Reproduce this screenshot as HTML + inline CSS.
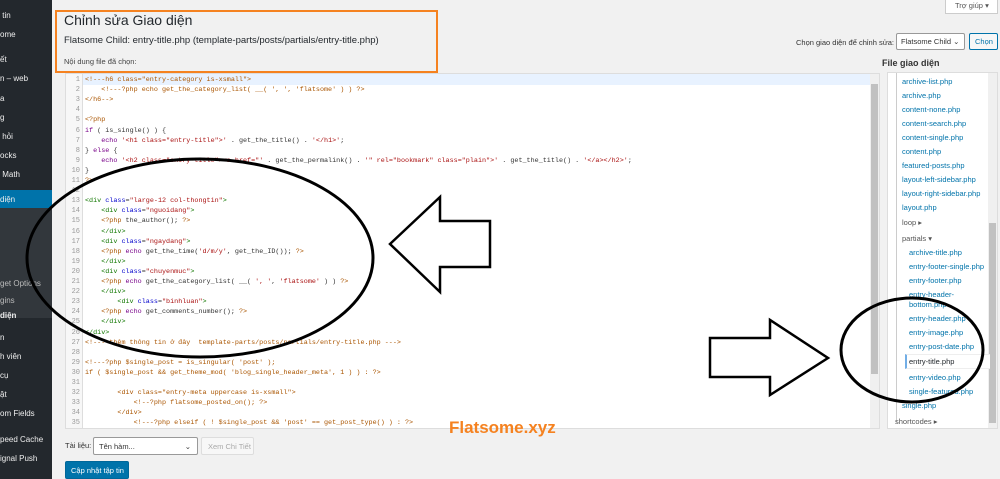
<!DOCTYPE html>
<html><head><meta charset="utf-8"><style>
*{margin:0;padding:0;box-sizing:border-box}
body{width:1000px;height:479px;overflow:hidden;background:#f1f1f1;font-family:"Liberation Sans",sans-serif;position:relative;color:#23282d}
.sb{position:absolute;left:0;top:0;width:52px;height:479px;background:#23282d}
.sb div{position:absolute;left:0;color:#eee;font-size:8px;white-space:nowrap}
.sub{position:absolute;left:0;top:208px;width:52px;height:110px;background:#32373c}
.act{position:absolute;left:0;top:190px;width:52px;height:18px;background:#0073aa}
.abs{position:absolute;white-space:nowrap}
.code{position:absolute;left:65px;top:73px;width:815px;height:356px;background:#fff;border:1px solid #ddd;overflow:hidden}
.gut{position:absolute;left:0;top:0;width:17px;height:100%;background:#f7f7f7;border-right:1px solid #ddd}
.ln{position:absolute;left:0;width:14px;text-align:right;font:7px "Liberation Mono",monospace;color:#999}
.cl{position:absolute;left:19px;font:6.75px "Liberation Mono",monospace;white-space:pre;color:#333}
.t{color:#170}.a{color:#00c}.s{color:#a11}.c{color:#a50}.k{color:#708}
.fl{position:absolute;left:887px;top:72px;width:111px;height:357px;background:#fff;border:1px solid #ddd;overflow:hidden}
.fi{position:absolute;font-size:7.5px;color:#0073aa;white-space:nowrap}
.fd{position:absolute;font-size:7.5px;color:#555;white-space:nowrap}
</style></head><body>
<div class="sb">
<div class="sub"></div><div class="act"></div>
<div style="top:11px">&nbsp;tin</div><div style="top:30px">ome</div><div style="top:55px">ết</div><div style="top:74px">n – web</div><div style="top:94px">a</div><div style="top:113px">g</div><div style="top:132px">&nbsp;hỏi</div><div style="top:151px">ocks</div><div style="top:170px">&nbsp;Math</div>
<div style="top:195px">diện</div>
<div style="top:279px;color:#bbb">get Options</div><div style="top:296px;color:#bbb">gins</div><div style="top:311px;font-weight:bold">diện</div>
<div style="top:333px">n</div><div style="top:352px">h viên</div><div style="top:371px">cụ</div><div style="top:390px">ật</div><div style="top:409px">om Fields</div><div style="top:435px">peed Cache</div><div style="top:454px">ignal Push</div>
</div>
<div class="abs" style="left:55px;top:10px;width:383px;height:63px;border:2px solid #f58220"></div>
<div class="abs" style="left:64px;top:12px;font-size:14px;color:#23282d">Chỉnh sửa Giao diện</div>
<div class="abs" style="left:64px;top:35px;font-size:9.5px;color:#23282d">Flatsome Child: entry-title.php (template-parts/posts/partials/entry-title.php)</div>
<div class="abs" style="left:64px;top:57px;font-size:7.5px;color:#444">Nội dung file đã chọn:</div>
<div class="abs" style="left:945px;top:-2px;width:53px;height:16px;background:#fff;border:1px solid #ccc;border-top:none;font-size:7.5px;color:#555;padding:3px 0 0 9px">Trợ giúp ▾</div>
<div class="abs" style="left:796px;top:38px;font-size:7.5px;color:#333">Chọn giao diện để chỉnh sửa:</div>
<div class="abs" style="left:896px;top:33px;width:69px;height:17px;background:#fff;border:1px solid #999;font-size:7.5px;color:#333;padding:3px 0 0 4px;border-radius:2px">Flatsome Child ⌄</div>
<div class="abs" style="left:969px;top:33px;width:29px;height:17px;background:#f7f7f7;border:1px solid #0073aa;font-size:7.5px;color:#0073aa;padding:3px 0 0 5px;border-radius:2px">Chọn</div>
<div class="abs" style="left:882px;top:58px;font-size:9px;font-weight:bold;color:#333">File giao diện</div>
<div class="code">
<div style="position:absolute;left:17px;top:0;width:790px;height:11px;background:#e8f2ff"></div>
<div class="gut"></div>
<div style="position:absolute;right:0;top:0;width:9px;height:100%;background:#f0f0f0"></div>
<div style="position:absolute;right:1px;top:10px;width:7px;height:290px;background:#c1c1c1"></div>
<div id="lines"></div>
</div>
<div class="fl">
<div style="position:absolute;right:0;top:0;width:9px;height:100%;background:#f0f0f0"></div>
<div style="position:absolute;right:1px;top:150px;width:7px;height:200px;background:#c1c1c1"></div>
<div style="position:absolute;left:8px;top:0;width:1px;height:350px;background:#ccc"></div>
<div class="fi" style="left:14px;top:4px">archive-list.php</div>
<div class="fi" style="left:14px;top:18px">archive.php</div>
<div class="fi" style="left:14px;top:32px">content-none.php</div>
<div class="fi" style="left:14px;top:46px">content-search.php</div>
<div class="fi" style="left:14px;top:60px">content-single.php</div>
<div class="fi" style="left:14px;top:74px">content.php</div>
<div class="fi" style="left:14px;top:88px">featured-posts.php</div>
<div class="fi" style="left:14px;top:102px">layout-left-sidebar.php</div>
<div class="fi" style="left:14px;top:116px">layout-right-sidebar.php</div>
<div class="fi" style="left:14px;top:130px">layout.php</div>
<div class="fd" style="left:14px;top:145px">loop ▸</div>
<div class="fd" style="left:14px;top:161px">partials ▾</div>
<div class="fi" style="left:21px;top:175px">archive-title.php</div>
<div class="fi" style="left:21px;top:189px">entry-footer-single.php</div>
<div class="fi" style="left:21px;top:203px">entry-footer.php</div>
<div class="fi" style="left:21px;top:217px;line-height:10px">entry-header-<br>bottom.php</div>
<div class="fi" style="left:21px;top:241px">entry-header.php</div>
<div class="fi" style="left:21px;top:255px">entry-image.php</div>
<div class="fi" style="left:21px;top:269px">entry-post-date.php</div>
<div style="position:absolute;left:17px;top:281px;width:85px;height:15px;background:#fff;border-left:2px solid #72aee6;border-top:1px solid #eee;border-bottom:1px solid #eee"></div>
<div class="fi" style="left:21px;top:284px;color:#23282d">entry-title.php</div>
<div class="fi" style="left:21px;top:300px">entry-video.php</div>
<div class="fi" style="left:21px;top:314px">single-featured.php</div>
<div class="fi" style="left:14px;top:328px">single.php</div>
<div class="fd" style="left:7px;top:344px">shortcodes ▸</div>
</div>
<div class="abs" style="left:65px;top:441px;font-size:7.5px;color:#333">Tài liệu:</div>
<div class="abs" style="left:93px;top:437px;width:105px;height:18px;background:#fff;border:1px solid #999;font-size:7.5px;color:#333;padding:4px 0 0 5px;border-radius:2px">Tên hàm...<span style="position:absolute;right:6px">⌄</span></div>
<div class="abs" style="left:201px;top:437px;width:53px;height:18px;background:#f7f7f7;border:1px solid #ddd;font-size:7.5px;color:#aaa;padding:4px 0 0 6px;border-radius:2px">Xem Chi Tiết</div>
<div class="abs" style="left:65px;top:461px;width:64px;height:18px;background:#0073aa;border:1px solid #006799;font-size:7.5px;color:#fff;padding:4px 0 0 5px;border-radius:2px">Cập nhật tập tin</div>
<div class="abs" style="left:449px;top:418px;font-size:17px;font-weight:bold;color:#f58220">Flatsome.xyz</div>
<svg class="abs" style="left:0;top:0" width="1000" height="479">
<g fill="none" stroke="#000" stroke-width="3">
<ellipse cx="200" cy="258" rx="173" ry="99"/>
<ellipse cx="912" cy="350" rx="71" ry="52"/>
</g>
<g fill="#fff" stroke="#000" stroke-width="2.5" stroke-linejoin="miter">
<polygon points="390,244 440,197 440,221 490,221 490,267 440,267 440,292"/>
<polygon points="710,338 770,338 770,320 828,358 770,395 770,377 710,377"/>
</g>
</svg>
<script>
var L=[
'<span class="c">&lt;!---h6 class="entry-category is-xsmall"&gt;</span>',
'    <span class="c">&lt;!---?php echo get_the_category_list( __( \', \', \'flatsome\' ) ) ?&gt;</span>',
'<span class="c">&lt;/h6--&gt;</span>','',
'<span class="c">&lt;?php</span>',
'<span class="k">if</span> ( is_single() ) {',
'    <span class="k">echo</span> <span class="s">\'&lt;h1 class="entry-title"&gt;\'</span> . get_the_title() . <span class="s">\'&lt;/h1&gt;\'</span>;',
'} <span class="k">else</span> {',
'    <span class="k">echo</span> <span class="s">\'&lt;h2 class="entry-title"&gt;&lt;a href="\'</span> . get_the_permalink() . <span class="s">\'" rel="bookmark" class="plain"&gt;\'</span> . get_the_title() . <span class="s">\'&lt;/a&gt;&lt;/h2&gt;\'</span>;',
'}','<span class="c">?&gt;</span>','',
'<span class="t">&lt;div</span> <span class="a">class</span>=<span class="s">"large-12 col-thongtin"</span><span class="t">&gt;</span>',
'    <span class="t">&lt;div</span> <span class="a">class</span>=<span class="s">"nguoidang"</span><span class="t">&gt;</span>',
'    <span class="c">&lt;?php</span> the_author(); <span class="c">?&gt;</span>',
'    <span class="t">&lt;/div&gt;</span>',
'    <span class="t">&lt;div</span> <span class="a">class</span>=<span class="s">"ngaydang"</span><span class="t">&gt;</span>',
'    <span class="c">&lt;?php</span> <span class="k">echo</span> get_the_time(<span class="s">\'d/m/y\'</span>, get_the_ID()); <span class="c">?&gt;</span>',
'    <span class="t">&lt;/div&gt;</span>',
'    <span class="t">&lt;div</span> <span class="a">class</span>=<span class="s">"chuyenmuc"</span><span class="t">&gt;</span>',
'    <span class="c">&lt;?php</span> <span class="k">echo</span> get_the_category_list( __( <span class="s">\', \'</span>, <span class="s">\'flatsome\'</span> ) ) <span class="c">?&gt;</span>',
'    <span class="t">&lt;/div&gt;</span>',
'        <span class="t">&lt;div</span> <span class="a">class</span>=<span class="s">"binhluan"</span><span class="t">&gt;</span>',
'    <span class="c">&lt;?php</span> <span class="k">echo</span> get_comments_number(); <span class="c">?&gt;</span>',
'    <span class="t">&lt;/div&gt;</span>',
'<span class="t">&lt;/div&gt;</span>',
'<span class="c">&lt;!--- thêm thông tin ở đây  template-parts/posts/partials/entry-title.php ---&gt;</span>','',
'<span class="c">&lt;!---?php $single_post = is_singular( \'post\' );</span>',
'<span class="c">if ( $single_post &amp;&amp; get_theme_mod( \'blog_single_header_meta\', 1 ) ) : ?&gt;</span>','',
'<span class="c">        &lt;div class="entry-meta uppercase is-xsmall"&gt;</span>',
'<span class="c">            &lt;!--?php flatsome_posted_on(); ?&gt;</span>',
'<span class="c">        &lt;/div&gt;</span>',
'<span class="c">            &lt;!---?php elseif ( ! $single_post &amp;&amp; \'post\' == get_post_type() ) : ?&gt;</span>'];
var h='';for(var i=0;i<L.length;i++){var y=2+i*10.1;h+='<div class="ln" style="top:'+y+'px">'+(i+1)+'</div><div class="cl" style="top:'+y+'px">'+L[i]+'</div>';}
document.getElementById('lines').innerHTML=h;
</script>
</body></html>
